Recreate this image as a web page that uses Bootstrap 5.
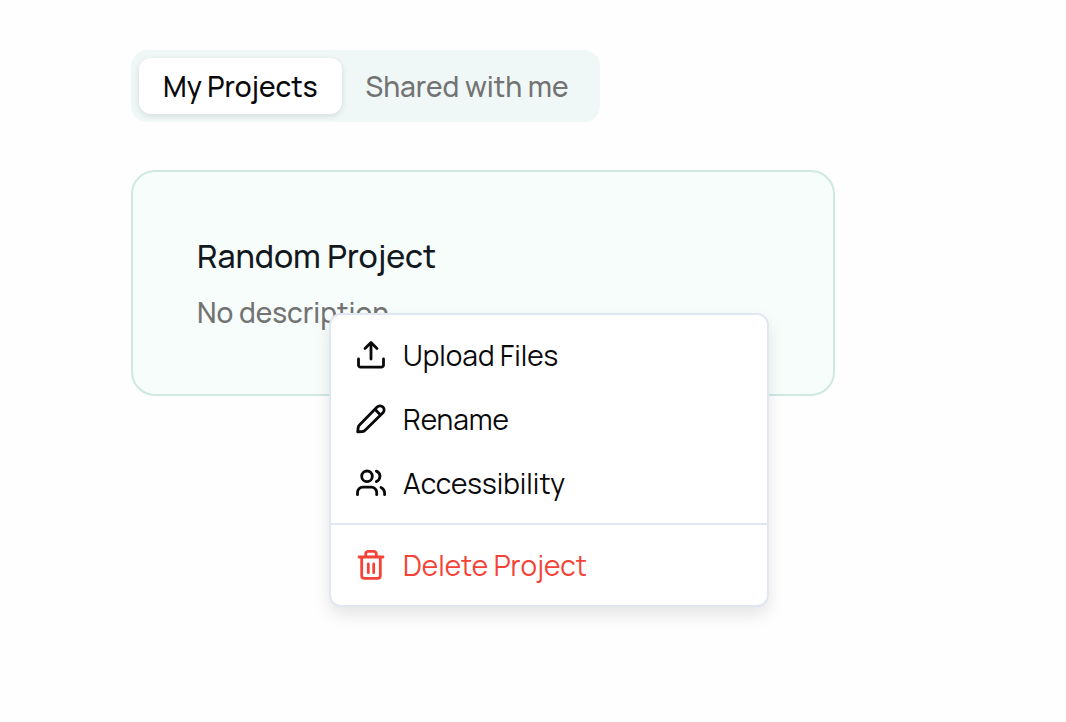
<!DOCTYPE html>
<html lang="en">
<head>
<meta charset="utf-8">
<meta name="viewport" content="width=device-width, initial-scale=1">
<title>My Projects</title>
<link href="https://cdn.jsdelivr.net/npm/bootstrap@5.3.0/dist/css/bootstrap.min.css" rel="stylesheet">
<style>
  body { font-family: Manrope, Inter, sans-serif; font-size: 28px; line-height: 40px; color: #09090b; background: #fefefe; }
  .page { padding: 50px 24px 24px 131px; }
  .segments { width: fit-content; background: #f0f8f7; border-radius: 16px; padding: 8px; }
  .segments .nav-link { color: #737373; background: transparent; border: 0; padding: 8px 24px; border-radius: 12px; font-weight: 500; line-height: 40px; }
  .segments .nav-link.active { color: #09090b; background: #fff; box-shadow: 0 2px 6px rgba(0, 0, 0, .12); }
  .project { max-width: 704px; margin-top: 48px; border: 2px solid #cfe8e1; border-radius: 24px; background: #f7fdfb; }
  .project .card-body { padding: 64px 64px 62px; }
  .project h2 { font-size: 32px; line-height: 40px; font-weight: 500; color: #111820; margin-bottom: 16px; }
  .project p { color: #737373; font-weight: 500; line-height: 40px; }
  .actions { top: 141px; left: 196px; width: 440px; padding: 8px 0; border: 2px solid #e1e6f3; border-radius: 12px; background: #fff; box-shadow: 0 8px 16px rgba(0, 0, 0, .1); font-size: 28px; color: #09090b; }
  .actions .dropdown-item { gap: 16px; padding: 12px 24px; font-weight: 400; color: #09090b; }
  .actions .dropdown-item.danger { color: #f44336; }
  .actions .dropdown-divider { margin: 8px 0; border-top: 2px solid #e1e6f3; opacity: 1; }
  .actions svg { width: 32px; height: 32px; flex: none; fill: none; stroke: currentColor; stroke-width: 2.8; stroke-linecap: round; stroke-linejoin: round; }
</style>
</head>
<body>
<main class="page min-vh-100">
  <div class="segments nav" role="tablist">
    <button class="nav-link active" type="button" role="tab" aria-selected="true">My Projects</button>
    <button class="nav-link" type="button" role="tab" aria-selected="false">Shared with me</button>
  </div>
  <article class="project card">
    <div class="card-body">
      <h2>Random Project</h2>
      <p class="mb-0">No description</p>
    </div>
    <ul class="actions dropdown-menu show">
      <li><button class="dropdown-item d-flex align-items-center" type="button">
        <svg viewBox="0 0 32 32" aria-hidden="true"><path d="M16 20V4M10 9.5l6-6 6 6M3.5 20v6a2.2 2.2 0 0 0 2.2 2.2h20.6a2.2 2.2 0 0 0 2.2-2.2v-6"/></svg>
        Upload Files</button></li>
      <li><button class="dropdown-item d-flex align-items-center" type="button">
        <svg viewBox="0 0 32 32" aria-hidden="true"><path d="M2.7 28.8l.5-4.3a4.5 4.5 0 0 1 1.3-2.6L22.1 4a4.1 4.1 0 0 1 5.8 0 4.1 4.1 0 0 1 0 5.8L10.1 27.2a4.5 4.5 0 0 1-2.7 1.3zM20.2 6.6l5.3 5.3"/></svg>
        Rename</button></li>
      <li><button class="dropdown-item d-flex align-items-center" type="button">
        <svg viewBox="0 0 32 32" aria-hidden="true"><circle cx="12" cy="9.3" r="5.3"/><path d="M2.5 27.7v-2.2a5.3 5.3 0 0 1 5.3-5.3h8.6a5.3 5.3 0 0 1 5.3 5.3v2.2M21.3 4.1a5.6 5.6 0 0 1 0 10.5M26 20.4a6.4 6.4 0 0 1 3.6 5.6v1.7"/></svg>
        Accessibility</button></li>
      <li><hr class="dropdown-divider"></li>
      <li><button class="dropdown-item danger d-flex align-items-center" type="button">
        <svg viewBox="0 0 32 32" aria-hidden="true"><path d="M4 8h24M6.7 8v18.7a2.7 2.7 0 0 0 2.7 2.7h13.2a2.7 2.7 0 0 0 2.7-2.7V8M10.7 8V5a2.7 2.7 0 0 1 2.7-2.7h5.2A2.7 2.7 0 0 1 21.3 5v3M13.3 15v8.7M18.7 15v8.7"/></svg>
        Delete Project</button></li>
    </ul>
  </article>
</main>
<script src="https://cdn.jsdelivr.net/npm/bootstrap@5.3.0/dist/js/bootstrap.bundle.min.js"></script>
</body>
</html>
